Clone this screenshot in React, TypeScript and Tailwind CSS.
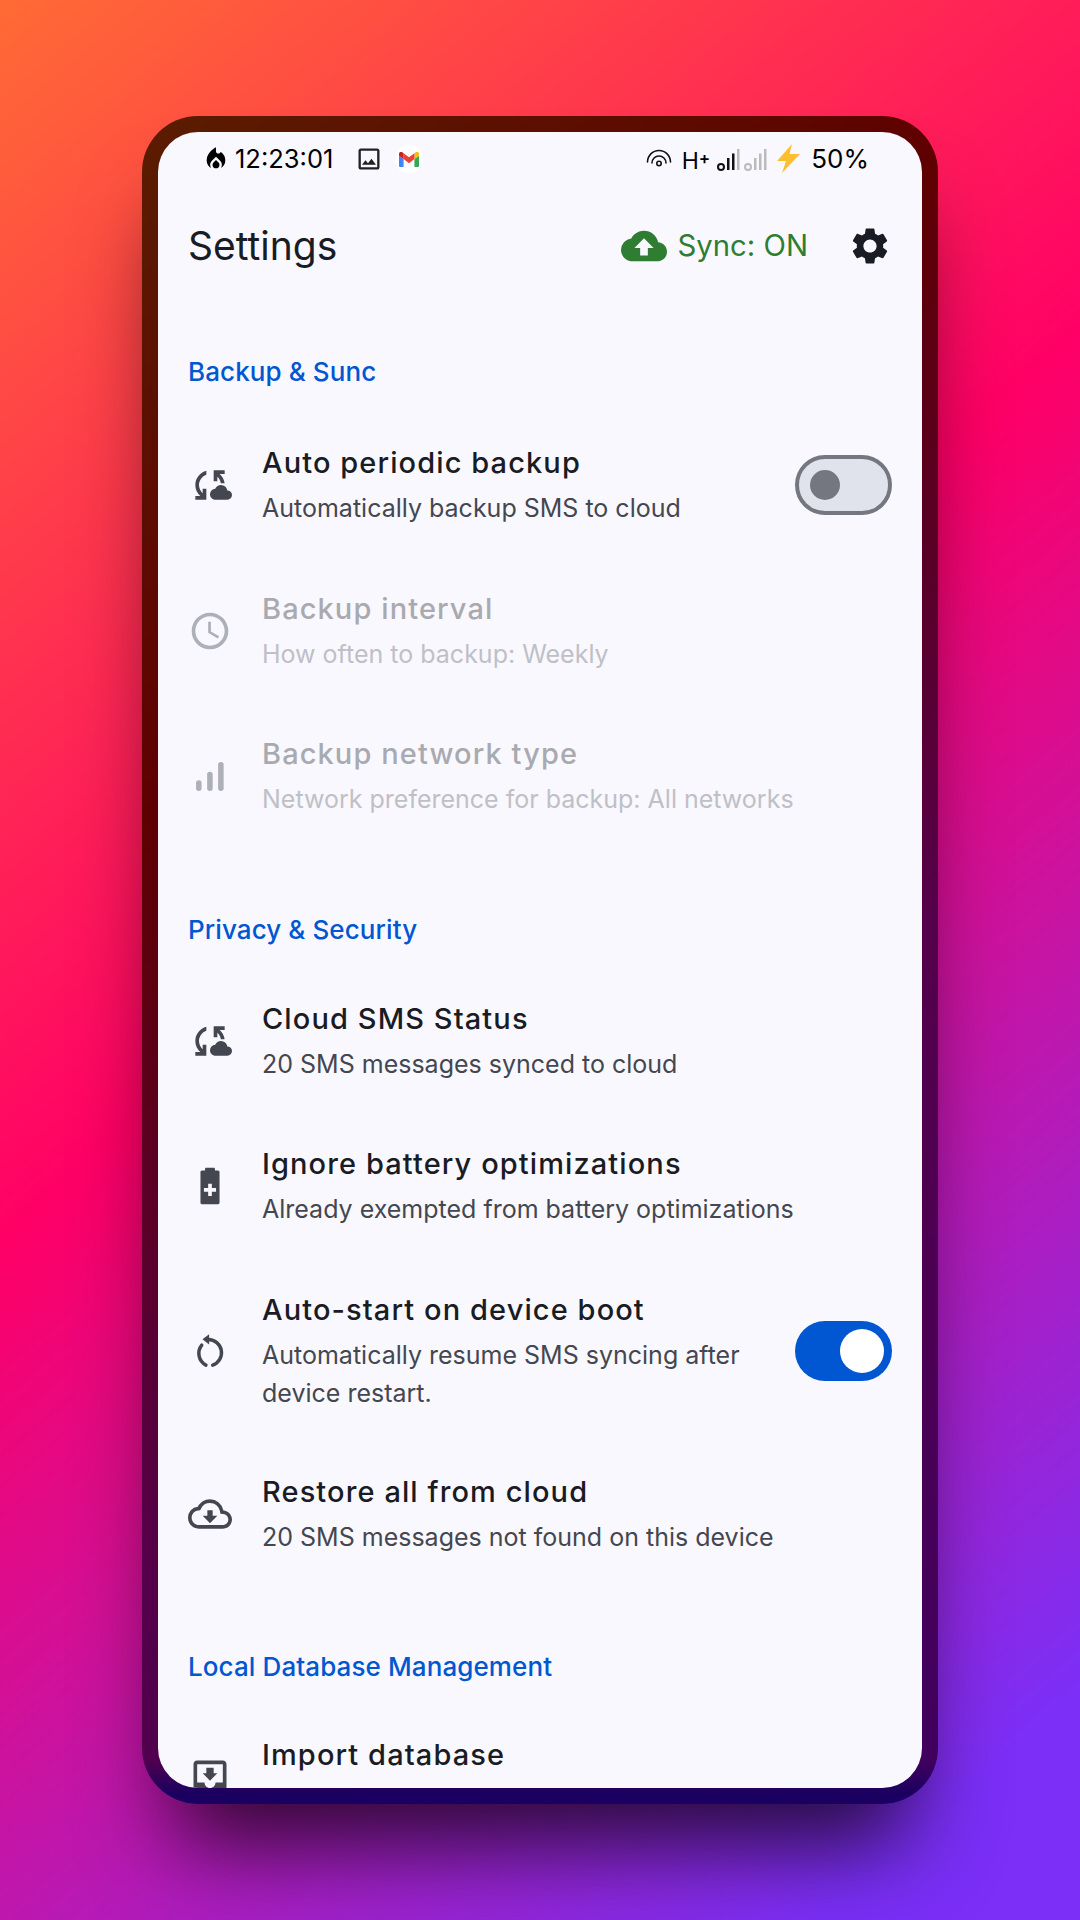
import { MdCloudSync, MdCloudUpload, MdLocalFireDepartment, MdOutlineAccessTime, MdOutlineCloudDownload, MdOutlineImage, MdSettings } from 'react-icons/md'
import type { ReactNode } from 'react'

const font = { fontFamily: 'Inter, "Noto Sans", sans-serif' }

function BatteryPlus() {
  return (
    <svg viewBox="0 0 24 24" className="w-[44px] h-[44px]" fill="currentColor">
      <path fillRule="evenodd" d="M9.300 2.700c0-.4.300-.7.700-.7h4c.4 0 .7.300.7.700V3.600h1.700c.5 0 .8.400.8.800v16.800c0 .5-.3.8-.8.800H7.600c-.5 0-.8-.3-.8-.8V4.400c0-.4.300-.8.800-.8h1.700zM11 10.800v2.300H8.700v2H11v2.300h2v-2.300h2.300v-2H13v-2.300z" />
    </svg>
  )
}

function SignalBars() {
  return (
    <svg viewBox="0 0 24 24" className="w-[36px] h-[36px]" fill="currentColor">
      <rect x="2.700" y="14.900" width="3.700" height="7.100" rx="1.800" />
      <rect x="10.100" y="9.100" width="3.700" height="12.900" rx="1.800" />
      <rect x="17.400" y="2.700" width="3.700" height="19.300" rx="1.800" />
    </svg>
  )
}

function RotateIcon() {
  return (
    <svg viewBox="0 0 24 24" className="w-[36px] h-[36px]" fill="none" stroke="currentColor" strokeWidth="2.300" strokeLinecap="round">
      <path d="M6.500 8.100A8.800 8.800 0 0 0 9.300 21.400" />
      <path d="M13.800 21.400A8.800 8.800 0 0 0 10.900 4.300" />
      <path d="M11.400 .8 7 4.200l4.400 3.500z" fill="currentColor" stroke="none" />
    </svg>
  )
}

function InboxIcon() {
  return (
    <svg viewBox="0 0 24 24" className="w-[44px] h-[44px]" fill="currentColor">
      <path fillRule="evenodd" d="M19 3H5c-1.100 0-2 .9-2 2v14c0 1.100.9 2 2 2h14c1.100 0 2-.9 2-2V5c0-1.100-.9-2-2-2zm0 2v10h-4c0 1.660-1.350 3-3 3s-3-1.340-3-3H5V5h14z" />
      <path d="M16 10h-2V7h-4v3H8l4 4 4-4z" />
    </svg>
  )
}

function Toggle({ on }: { on: boolean }) {
  if (on) {
    return (
      <div className="w-[97px] h-[60px] rounded-full bg-[#0057d1] flex items-center justify-end pr-[8px] shrink-0">
        <div className="w-[44px] h-[44px] rounded-full bg-white" />
      </div>
    )
  }
  return (
    <div className="w-[97px] h-[60px] rounded-full bg-[#e0e2ec] border-[4px] border-[#74777f] flex items-center pl-[11px] shrink-0">
      <div className="w-[30px] h-[30px] rounded-full bg-[#74777f]" />
    </div>
  )
}

function SectionHeader({ children, className }: { children: ReactNode; className: string }) {
  return <div className={`text-[26px] leading-[32px] tracking-[0.1px] font-medium text-[#0057d1] px-[30px] ${className}`}>{children}</div>
}

function Row({ icon, title, sub, disabled, toggle, className = '' }: { icon: ReactNode; title: string; sub?: ReactNode; disabled?: boolean; toggle?: boolean; className?: string }) {
  return (
    <div className={`flex items-center pl-[30px] pr-[30px] pt-[32px] ${className || 'pb-[29.500px]'}`}>
      <div className={`w-[44px] flex justify-center shrink-0 ${disabled ? 'text-[#aeb0b8]' : 'text-[#44474f]'}`}>{icon}</div>
      <div className="ml-[30px] flex-1 min-w-0">
        <div className={`text-[29px] leading-[40px] tracking-[1.1px] font-medium ${disabled ? 'text-[#a9aaaf]' : 'text-[#1a1c24]'}`}>{title}</div>
        <div className={`mt-[6px] min-h-[38px] text-[25px] leading-[38px] ${disabled ? 'text-[#bfc0c6]' : 'text-[#44474f]'}`}>{sub}</div>
      </div>
      {toggle !== undefined && <Toggle on={toggle} />}
    </div>
  )
}

function StatusBar() {
  return (
    <div className="h-[54px] flex items-center justify-between pl-[44px] pr-[53px] text-black">
      <div className="flex items-center">
        <MdLocalFireDepartment className="w-[28px] h-[28px]" />
        <span className="ml-[5px] text-[25.500px] leading-[30px]">12:23:01</span>
        <MdOutlineImage className="ml-[22px] w-[28px] h-[28px] text-[#222]" />
        <div className="ml-[12px] w-[28px] h-[28px] rounded-full bg-white flex items-center justify-center">
          <svg viewBox="0 0 24 18" className="w-[20px] h-[15px]">
            <path d="M1.600 18H5.500V8.500L0 4.400V16.400C0 17.300.7 18 1.600 18z" fill="#4285f4" />
            <path d="M18.500 18h3.900c.9 0 1.600-.7 1.600-1.600V4.400L18.500 8.500z" fill="#34a853" />
            <path d="M18.500 1.400v7.100L24 4.400V2.200C24 .2 21.700-.9 20.100.3z" fill="#fbbc04" />
            <path d="M5.500 8.500V1.400L12 6.300l6.500-4.900v7.100L12 13.400z" fill="#ea4335" />
            <path d="M0 2.200v2.200l5.500 4.100V1.400L3.900.3C2.300-.9 0 .2 0 2.200z" fill="#c5221f" />
          </svg>
        </div>
      </div>
      <div className="flex items-center">
        <svg viewBox="0 0 26 20" className="w-[26px] h-[20px]" fill="none" stroke="#111" strokeWidth="1.600" strokeLinecap="round">
          <path d="M1.500 13a11.500 11.500 0 0 1 23 0" />
          <path d="M6 14a7 7 0 0 1 14 0" />
          <circle cx="13" cy="14.500" r="2.200" />
        </svg>
        <span className="ml-[10px] text-[23px] leading-[26px]">H<span className="text-[17px] align-[5px] font-semibold">+</span></span>
        <svg viewBox="0 0 54 24" className="ml-[6px] w-[54px] h-[24px] mt-[3px]">
          <circle cx="5" cy="18" r="3" fill="none" stroke="#111" strokeWidth="2" />
          <rect x="11" y="9" width="2.500" height="12" fill="#111" />
          <rect x="16" y="4.500" width="2.500" height="16.500" fill="#111" />
          <rect x="21" y="0" width="2.500" height="21" fill="#bbb" />
          <circle cx="32" cy="18" r="3" fill="none" stroke="#bbb" strokeWidth="2" />
          <rect x="38" y="9" width="2.500" height="12" fill="#bbb" />
          <rect x="43" y="4.500" width="2.500" height="16.500" fill="#bbb" />
          <rect x="48" y="0" width="2.500" height="21" fill="#bbb" />
        </svg>
        <svg viewBox="0 0 26 30" className="ml-[5px] w-[26px] h-[30px]">
          <path d="M17 0 2 17h9L7 29l18-19H14.500z" fill="#fdbf2d" />
        </svg>
        <span className="ml-[10px] text-[26px] leading-[30px]">50%</span>
      </div>
    </div>
  )
}

export default function App() {
  return (
    <div
      className="w-[1080px] h-[1920px] overflow-hidden pt-[116px] flex justify-center bg-[linear-gradient(140deg,#ff6b35_0%,#ff0066_44%,#7b2ff7_92%)]"
      style={font}
    >
      <div className="w-[796px] h-[1688px] p-[16px] rounded-[56px] bg-[linear-gradient(to_top,#1a0060_0px,#1a0060_10px,transparent_44px),linear-gradient(140deg,#5a1d00_0%,#5f0000_30%,#55004a_62%,#40005f_100%)] shadow-[0_70px_90px_-30px_rgba(0,0,0,0.75)]">
        <div className="h-full rounded-[40px] overflow-hidden bg-[#f9f8ff]">
          <StatusBar />
          <div className="mt-[32px] h-[56px] flex items-center pl-[30px] pr-[30px]">
            <div className="flex-1 text-[39px] leading-[56px] text-[#1a1c24]">Settings</div>
            <MdCloudUpload className="w-[46px] h-[46px] text-[#2e7d32]" />
            <span className="ml-[11px] text-[29.300px] text-[#2e7d32]">Sync: ON</span>
            <MdSettings className="ml-[40px] w-[44px] h-[44px] text-[#1a1c24]" />
          </div>
          <SectionHeader className="mt-[82px]">Backup &amp; Sunc</SectionHeader>
          <Row className="mt-[23px] pb-[29.500px]" icon={<MdCloudSync className="w-[44px] h-[44px]" />} title="Auto periodic backup" sub="Automatically backup SMS to cloud" toggle={false} />
          <Row disabled icon={<MdOutlineAccessTime className="w-[44px] h-[44px]" />} title="Backup interval" sub="How often to backup: Weekly" />
          <Row disabled icon={<SignalBars />} title="Backup network type" sub="Network preference for backup: All networks" />
          <SectionHeader className="mt-[66px]">Privacy &amp; Security</SectionHeader>
          <Row className="mt-[21px] pb-[29.500px]" icon={<MdCloudSync className="w-[44px] h-[44px]" />} title="Cloud SMS Status" sub="20 SMS messages synced to cloud" />
          <Row icon={<BatteryPlus />} title="Ignore battery optimizations" sub="Already exempted from battery optimizations" />
          <Row className="pb-[28px]" icon={<RotateIcon />} title="Auto-start on device boot" sub={<>Automatically resume SMS syncing after<br />device restart.</>} toggle />
          <Row icon={<MdOutlineCloudDownload className="w-[48px] h-[48px]" />} title="Restore all from cloud" sub="20 SMS messages not found on this device" />
          <SectionHeader className="mt-[66px]">Local Database Management</SectionHeader>
          <Row className="mt-[20px] pb-[29.500px]" icon={<InboxIcon />} title="Import database" />
        </div>
      </div>
    </div>
  )
}
